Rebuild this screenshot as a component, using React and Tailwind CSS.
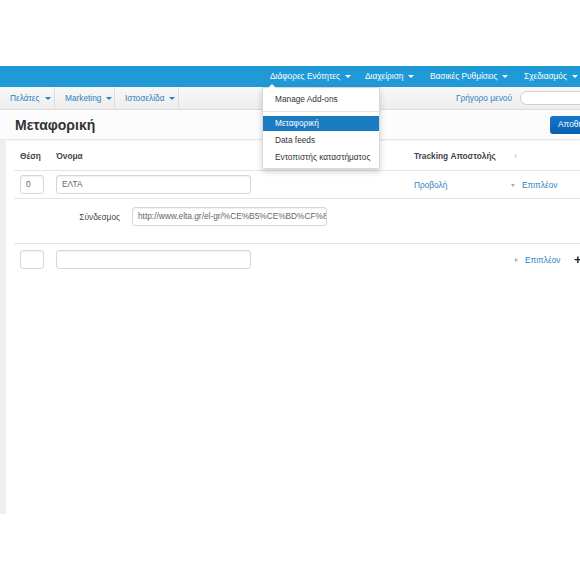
import React from 'react'

const topNav = [
  { label: 'Διάφορες Ενότητες', w: 'w-[95px]' },
  { label: 'Διαχείριση', w: 'w-[65px]' },
  { label: 'Βασικές Ρυθμίσεις', w: 'w-[94px]' },
  { label: 'Σχεδιασμός', w: 'w-[70px]' },
]

const subNav = [
  { label: 'Πελάτες', w: 'w-[55px]' },
  { label: 'Marketing', w: 'w-[60px]' },
  { label: 'Ιστοσελίδα', w: 'w-[64px]' },
]

function Caret({ className = '' }) {
  return <span className={`inline-block ml-[5px] align-middle border-x-[3px] border-x-transparent border-t-[3px] ${className}`} />
}

function Field({ w, value = '', h = 'h-[19px]' }) {
  return (
    <div className={`${w} ${h} border border-[#d6d6d6] rounded-[3px] bg-white shadow-[inset_0_1px_1px_rgba(0,0,0,0.06)] flex items-center px-[5px] text-[8.3px] text-[#666] overflow-hidden whitespace-nowrap`}>
      {value}
    </div>
  )
}

export default function App() {
  return (
    <div className="w-[580px] h-[580px] bg-white overflow-hidden relative font-['Liberation_Sans',Arial,sans-serif]">
      <div className="h-[66px]" />

      {/* top blue bar */}
      <div className="h-[21px] bg-[#1f9ad7] flex pl-[262px] text-[8.3px] text-white">
        {topNav.map(n => (
          <div key={n.label} className={`${n.w} shrink-0 flex items-center pl-[8px] whitespace-nowrap`}>
            {n.label}
            <Caret className="border-t-white" />
          </div>
        ))}
      </div>

      {/* secondary nav */}
      <div className="h-[23px] bg-gradient-to-b from-[#f8f8f8] to-[#ededed] border-b border-[#dcdcdc] flex items-center text-[8.3px] text-[#2e7fc0]">
        {subNav.map(n => (
          <div key={n.label} className={`${n.w} shrink-0 h-full flex items-center pl-[10px] border-r border-[#dedede] whitespace-nowrap`}>
            {n.label}
            <Caret className="border-t-[#2e7fc0]" />
          </div>
        ))}
        <div className="flex-1" />
        <span className="mr-[8px] whitespace-nowrap">Γρήγορο μενού</span>
        <div className="w-[70px] h-[14px] bg-white border border-[#cfcfcf] rounded-full -mr-[10px] shrink-0" />
      </div>

      {/* title bar */}
      <div className="h-[30px] bg-[#fcfcfc] border-b border-[#e6e6e6] shadow-[0_1px_2px_rgba(0,0,0,0.05)] flex items-center pl-[15px]">
        <h1 className="text-[14px] font-bold text-[#333] leading-none">Μεταφορική</h1>
        <div className="flex-1" />
        <div className="h-[18px] w-[50px] -mr-[20px] rounded-[3px] bg-gradient-to-b from-[#1278cf] to-[#0b5fb0] text-white text-[8.3px] flex items-center pl-[8px] shrink-0 overflow-hidden whitespace-nowrap">
          Αποθήκευση
        </div>
      </div>

      {/* body */}
      <div className="flex h-[374px]">
        <div className="w-[6px] bg-[#efefef] shrink-0" />
        <div className="flex-1 pl-[8px] text-[8.3px] text-[#333]">
          {/* header */}
          <div className="h-[31px] border-b border-[#e4e4e4] flex items-center pt-[3px] font-bold text-[#444]">
            <div className="w-[42px] pl-[6px] shrink-0">Θέση</div>
            <div className="w-[358px] shrink-0">Όνομα</div>
            <div className="w-[100px] shrink-0">Tracking Αποστολής</div>
            <div className="text-[#aaa] font-normal">›</div>
          </div>

          {/* row 1 */}
          <div className="h-[28px] border-b border-[#e4e4e4] flex items-center">
            <div className="w-[42px] pl-[6px] shrink-0"><Field w="w-[24px]" value="0" /></div>
            <div className="w-[358px] shrink-0"><Field w="w-[195px]" value="ΕΛΤΑ" /></div>
            <div className="w-[97px] shrink-0 text-[#2e7fc0] pt-[2px]">Προβολή</div>
            <div className="flex items-center text-[#2e7fc0] pt-[2px]">
              <span className="inline-block border-x-[2px] border-x-transparent border-t-[3px] border-t-[#aaa] mr-[7px]" />
              Επιπλέον
            </div>
          </div>

          {/* detail row */}
          <div className="h-[45px] border-b border-[#e4e4e4] flex items-start pt-[8px]">
            <div className="w-[118px] shrink-0 text-right pr-[12px] text-[#444] pt-[4px]">Σύνδεσμος</div>
            <Field w="w-[195px]" value="http://www.elta.gr/el-gr/%CE%B5%CE%BD%CF%8" />
          </div>

          {/* row 2 */}
          <div className="h-[30px] flex items-center">
            <div className="w-[42px] pl-[6px] shrink-0"><Field w="w-[24px]" /></div>
            <div className="w-[457px] shrink-0"><Field w="w-[195px]" /></div>
            <div className="flex items-center text-[#2e7fc0] pt-[2px] w-[61px] shrink-0">
              <span className="inline-block border-y-[2px] border-y-transparent border-l-[3px] border-l-[#aaa] mr-[7px] ml-[2px]" />
              Επιπλέον
            </div>
            <div className="text-[13px] font-bold text-[#222] leading-none">+</div>
          </div>
        </div>
      </div>

      {/* dropdown menu */}
      <div className="absolute left-[262px] top-[87px] w-[118px] bg-white border border-[#d8d8d8] rounded-b-[2px] shadow-[0_3px_6px_rgba(0,0,0,0.18)] text-[8.3px] text-[#333] py-[3px]">
        <div className="absolute -top-[4px] left-[5px] w-0 h-0 border-x-[4px] border-x-transparent border-b-[4px] border-b-white" />
        <div className="h-[16px] flex items-center pl-[12px]">Manage Add-ons</div>
        <div className="h-px bg-[#e5e5e5] my-[4px]" />
        <div className="h-[15px] flex items-center pl-[12px] bg-[#1a7bc1] text-white">Μεταφορική</div>
        <div className="h-[18px] flex items-center pl-[12px]">Data feeds</div>
        <div className="h-[16px] flex items-center pl-[12px] whitespace-nowrap">Εντοπιστής καταστήματος</div>
      </div>
    </div>
  )
}
